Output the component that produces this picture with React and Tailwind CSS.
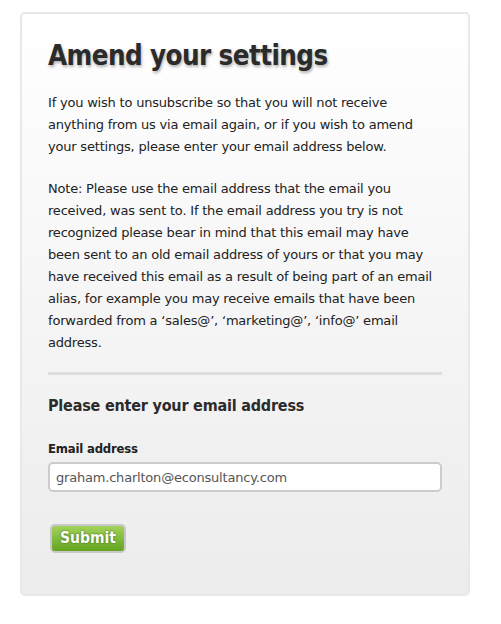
export default function App() {
  return (
    <div className="min-h-[624px] w-[501px] bg-white pt-3 pl-5 font-['DejaVu_Sans',sans-serif] text-[#222]">
      <div className="w-[450px] rounded-[5px] border-2 border-[#e8e8e8] bg-gradient-to-b from-white to-[#ececec] px-[26px] pt-[22px] pb-[41px]">
        <h1 className="font-['DejaVu_Sans_Condensed','DejaVu_Sans',sans-serif] text-[27.5px] font-bold leading-[38px] tracking-[-0.6px] text-[#2b2b2b] [text-shadow:1px_2px_3px_rgba(0,0,0,0.3)]">
          Amend your settings
        </h1>
        <p className="mt-[18px] text-[13px] leading-[22px] tracking-[-0.2px]">
          If you wish to unsubscribe so that you will not receive anything from us via email again, or if you wish to amend your settings, please enter your email address below.
        </p>
        <p className="mt-[20px] text-[13px] leading-[22px] tracking-[-0.2px]">
          Note: Please use the email address that the email you received, was sent to. If the email address you try is not recognized please bear in mind that this email may have been sent to an old email address of yours or that you may have received this email as a result of being part of an email alias, for example you may receive emails that have been forwarded from a ‘sales@’, ‘marketing@’, ‘info@’ email address.
        </p>
        <div className="mt-[18px] h-[3px] w-[394px] bg-[#dddddd]" />
        <h2 className="mt-[20px] font-['DejaVu_Sans_Condensed','DejaVu_Sans',sans-serif] text-[16px] font-bold leading-[22px] tracking-[-0.2px] text-[#2b2b2b]">
          Please enter your email address
        </h2>
        <form className="mt-[22px]" onSubmit={(e) => e.preventDefault()}>
          <label className="block font-['DejaVu_Sans_Condensed','DejaVu_Sans',sans-serif] text-[13px] font-bold leading-[20px] tracking-[-0.2px] text-[#222]">
            Email address
          </label>
          <input
            type="text"
            defaultValue="graham.charlton@econsultancy.com"
            className="mt-[3px] h-[30px] w-[394px] rounded-[5px] border-2 border-[#cccccc] bg-white px-[6px] text-[13px] tracking-[-0.2px] text-[#555] outline-none"
          />
          <button
            type="submit"
            className="mt-[32px] ml-[2px] h-[29px] rounded-[5px] border-2 border-[#c8c8c8] bg-gradient-to-b from-[#a3d35a] to-[#63a41c] px-[8px] font-['DejaVu_Sans_Condensed','DejaVu_Sans',sans-serif] text-[15.5px] font-bold leading-none text-white [text-shadow:0_0_2px_rgba(40,80,0,0.9)]"
          >
            Submit
          </button>
        </form>
      </div>
    </div>
  );
}
